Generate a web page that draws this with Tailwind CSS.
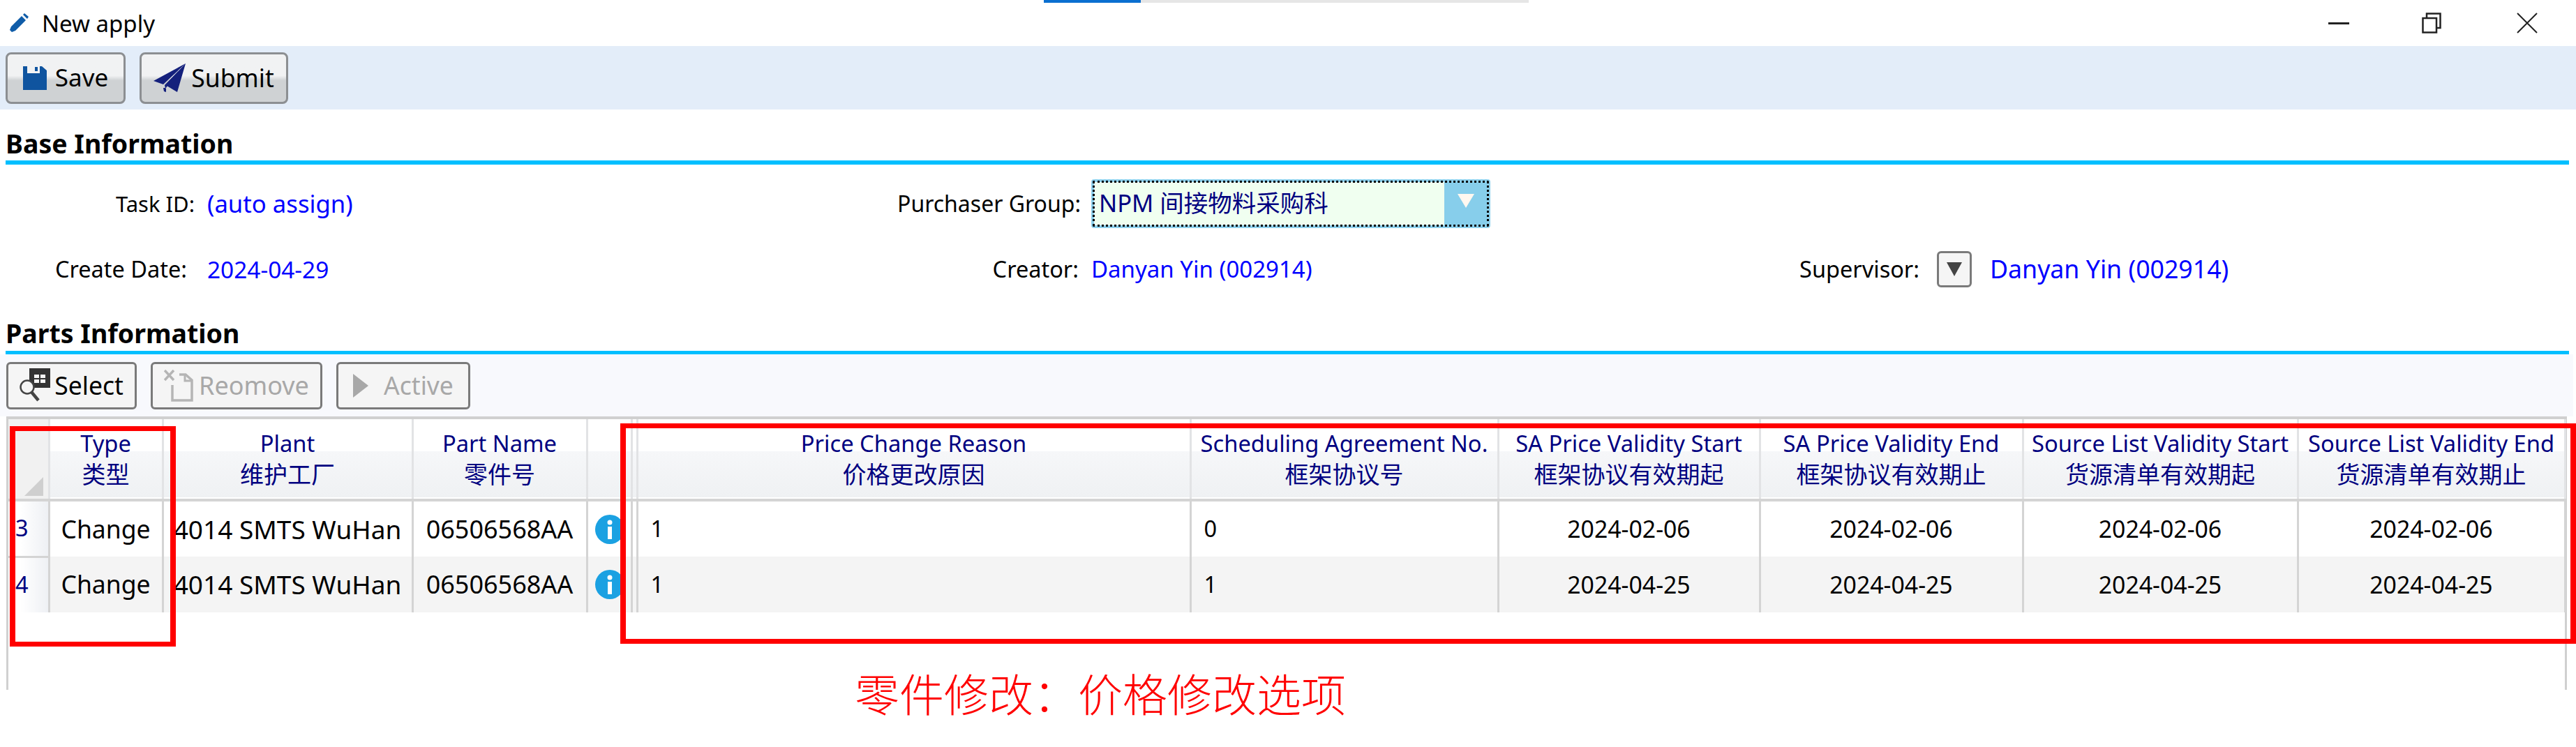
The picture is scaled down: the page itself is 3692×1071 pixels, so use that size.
<!DOCTYPE html>
<html lang="en">
<head>
    <meta charset="UTF-8">
    <title>New apply</title>
    <script src="https://cdn.jsdelivr.net/npm/@tailwindcss/browser@4"></script>
</head>
<body class="bg-white text-black overflow-hidden font-['Noto_Sans','Noto_Sans_CJK_SC',sans-serif] text-[32.5px]">
<div class="relative w-[3692px] h-[1071px]">

    <!-- title bar -->
    <div class="relative h-[66px] flex items-center pl-[13px]">
        <div class="absolute left-[1496px] top-0 w-[695px] h-1 bg-[#e6e6e6]"><div class="w-[139px] h-1 bg-[#0a6fd0]"></div></div>
        <svg class="w-[28px] h-[28px]" viewBox="0 0 28 28"><path d="M1 24 L3 19 L18 4 L24 10 L9 25 L4 27 Z M20 2 L22 0 L28 5 L26 8 Z" fill="#0f5ca8"/></svg>
        <span class="ml-[19px] text-[33px] leading-none">New apply</span>
        <div class="ml-auto flex items-center mr-[55px]">
            <svg class="w-[30px] h-[30px]" viewBox="0 0 30 30"><path d="M0 15.5 H30" stroke="#222" stroke-width="3"/></svg>
            <svg class="ml-[104px] w-[28px] h-[30px]" viewBox="0 0 28 30"><path d="M1.5 8 H21 V28.5 H1.5 Z M7 8 V1.5 H26.5 V22 H21" fill="none" stroke="#222" stroke-width="2.5"/></svg>
            <svg class="ml-[108px] w-[30px] h-[30px]" viewBox="0 0 30 30"><path d="M1 1 L29 29 M29 1 L1 29" stroke="#222" stroke-width="2"/></svg>
        </div>
    </div>

    <!-- main toolbar -->
    <div class="h-[91px] bg-[#e3edf9] flex items-center pl-2 gap-5">
        <button class="h-[74px] w-[172px] flex items-center justify-center gap-[12px] rounded-lg border-[3px] border-[#8c8f92] bg-gradient-to-b from-[#f1f2f3] from-45% to-[#cfd2d4] to-55%">
            <svg class="w-[34px] h-[34px]" viewBox="0 0 34 34"><path d="M0 0 H6 V10 H24 V0 H27 L34 6 V34 H0 Z M17 1 H21 V7 H17 Z" fill="#0f549f"/></svg>
            <span class="text-[35px]">Save</span>
        </button>
        <button class="h-[74px] w-[213px] flex items-center justify-center gap-[8px] rounded-lg border-[3px] border-[#8c8f92] bg-gradient-to-b from-[#f1f2f3] from-45% to-[#cfd2d4] to-55%">
            <svg class="w-[46px] h-[42px]" viewBox="0 0 46 42"><path d="M46 0 L0 25 L14 30 Z M46 0 L19 32 L34 41 Z M46 0 L16 31 L17 36 Z M14 35 L18 35 L18 41 L15 40 Z" fill="#14207c"/></svg>
            <span class="text-[35.5px]">Submit</span>
        </button>
    </div>

    <!-- base information -->
    <div class="mt-[26px] ml-2 mr-[10px] h-[53px] border-b-[6px] border-[#00bfff] font-bold text-[37.5px] leading-[46px]">Base Information</div>
    <div>
        <div class="flex items-center h-[94px] mt-[9px]">
            <div class="w-[279px] text-right text-[31px]">Task ID:</div>
            <div class="ml-[18px] w-[973px] text-[#0000ff] text-[34.7px]">(auto assign)</div>
            <div class="w-[279px] text-right text-[32px]">Purchaser Group:</div>
            <div class="ml-[15px] w-[572px] h-[70px] flex rounded border-[4px] border-[#8dd0ec] bg-[#f0fff0] outline-dotted outline-[3px] -outline-offset-[5px] outline-black">
                <div class="flex-1 pl-[7px] leading-[60px] text-[#000080] text-[34.5px]">NPM 间接物料采购科</div>
                <div class="w-[62px] bg-[#87ceeb] flex items-center justify-center pb-2">
                    <svg class="w-6 h-5" viewBox="0 0 24 20"><path d="M0 0 H24 L12 20 Z" fill="#fff8f0"/></svg>
                </div>
            </div>
        </div>
        <div class="flex items-center h-[94px]">
            <div class="w-[268px] text-right">Create Date:</div>
            <div class="ml-[29px] w-[1249px] text-[#0000ff] text-[33.4px]">2024-04-29</div>
            <div class="w-0 flex justify-end whitespace-nowrap">Creator:</div>
            <div class="ml-[18px] w-[1187px] text-[#0000ff] text-[33px]">Danyan Yin (002914)</div>
            <div class="w-0 flex justify-end whitespace-nowrap">Supervisor:</div>
            <button class="ml-[25px] w-[50px] h-[52px] rounded-md border-[3px] border-[#7a7a7a] bg-[#f5f5f5] flex items-center justify-center">
                <svg class="w-[22px] h-[20px]" viewBox="0 0 22 20"><path d="M0 0 H22 L11 20 Z" fill="#444"/></svg>
            </button>
            <div class="ml-[26px] text-[#0000ff] text-[35.7px]">Danyan Yin (002914)</div>
        </div>
    </div>

    <!-- parts information -->
    <div class="mt-[11px] ml-2 mr-[10px] h-[64px] pt-[11px] border-b-[5px] border-[#00bfff] font-bold text-[37.5px] leading-[46px]">Parts Information</div>
    <div class="h-[89px] mr-[4px] bg-[#f8f9fd] flex items-center pl-[9px] gap-5">
        <button class="h-[68px] w-[187px] flex items-center justify-center gap-[6px] rounded-md border-[3px] border-[#7a7a7a] bg-[#f5f5f5]">
            <svg class="w-[44px] h-[50px]" viewBox="0 0 44 50">
                <path d="M14 0 H44 V28 H14 Z" fill="#333"/><path d="M21 9 H28 V14 H21 Z M30 9 H37 V14 H30 Z M21 16 H28 V21 H21 Z M30 16 H37 V21 H30 Z" fill="#f5f5f5"/>
                <circle cx="11" cy="27" r="9.5" fill="#f5f5f5" stroke="#444" stroke-width="2.5"/><path d="M17 34 L27 46" stroke="#444" stroke-width="4.5"/>
            </svg>
            <span class="text-[35.5px]">Select</span>
        </button>
        <button class="h-[68px] w-[246px] flex items-center justify-center gap-[8px] rounded-md border-[3px] border-[#7a7a7a] bg-[#f5f5f5] text-[#a8a8a8]">
            <svg class="w-[42px] h-[46px]" viewBox="0 0 42 46">
                <path d="M1 1 L14 15 M14 1 L1 15" stroke="#b5b5b5" stroke-width="3.5"/>
                <path d="M22 7 H31 L40 15 V44 H12 V22" fill="none" stroke="#b5b5b5" stroke-width="3.5"/><path d="M30 7 V16 H40" fill="none" stroke="#b5b5b5" stroke-width="3"/>
            </svg>
            <span class="text-[36px]">Reomove</span>
        </button>
        <button class="h-[68px] w-[192px] flex items-center justify-center gap-[22px] rounded-md border-[3px] border-[#7a7a7a] bg-[#f5f5f5] text-[#a8a8a8]">
            <svg class="w-[22px] h-[34px]" viewBox="0 0 22 34"><path d="M0 0 L22 17 L0 34 Z" fill="#a8a8a8"/></svg>
            <span class="text-[35.5px]">Active</span>
        </button>
    </div>

    <!-- grid -->
    <div class="ml-[9px] w-[3670px] h-[392px] border-x-[3px] border-t-[4px] border-[#d0d0d0]">
        <table class="table-fixed w-[3664px] border-collapse">
            <colgroup>
                <col class="w-[58px]"><col class="w-[163px]"><col class="w-[358px]"><col class="w-[250px]"><col class="w-[64px]"><col class="w-[8px]"><col class="w-[793px]"><col class="w-[441px]"><col class="w-[375px]"><col class="w-[377px]"><col class="w-[394px]"><col class="w-[383px]">
            </colgroup>
            <thead>
                <tr class="h-[116px] text-[#000080] text-center text-[32.7px] leading-[45px] bg-[linear-gradient(to_bottom,#fff_41%,#f6f7f9_41%,#eff1f3_100%)] border-b-[4px] border-[#d4d4d4] [&>th]:font-normal [&>th]:border-r-[3px] [&>th]:border-[#e2e3e5] [&>th]:whitespace-nowrap [&_span]:text-[34px]">
                    <th class="relative bg-[#f1f1f1]">
                        <svg class="absolute right-[7px] bottom-[4px] w-[27px] h-[27px]" viewBox="0 0 27 27"><path d="M27 0 V27 H0 Z" fill="#cfcfcf"/></svg>
                    </th>
                    <th>Type<br><span>类型</span></th>
                    <th>Plant<br><span>维护工厂</span></th>
                    <th>Part Name<br><span>零件号</span></th>
                    <th></th>
                    <th></th>
                    <th>Price Change Reason<br><span>价格更改原因</span></th>
                    <th>Scheduling Agreement No.<br><span>框架协议号</span></th>
                    <th>SA Price Validity Start<br><span>框架协议有效期起</span></th>
                    <th>SA Price Validity End<br><span>框架协议有效期止</span></th>
                    <th>Source List Validity Start<br><span>货源清单有效期起</span></th>
                    <th>Source List Validity End<br><span>货源清单有效期止</span></th>
                </tr>
            </thead>
            <tbody class="[&_td]:border-r-[3px] [&_td]:border-[#d4d4d4] [&_td]:whitespace-nowrap">
                <tr class="h-[81px]">
                    <td class="text-[#000080] pl-[10px] bg-gradient-to-r from-white from-30% to-[#eef0f4] border-b-[3px]">3</td>
                    <td class="text-center text-[35.5px]">Change</td>
                    <td class="text-center text-[37px]">4014 SMTS WuHan</td>
                    <td class="text-center text-[36px]">06506568AA</td>
                    <td><svg class="ml-[10px] w-[42px] h-[42px]" viewBox="0 0 42 42"><circle cx="21" cy="21" r="21" fill="#1ba1e2"/><path d="M17.5 11 a3.5 3.5 0 1 1 7 0 a3.5 3.5 0 1 1 -7 0 Z M18 17 H24 V35 H18 Z" fill="#fff"/></svg></td>
                    <td></td>
                    <td class="pl-[18px]">1</td>
                    <td class="pl-[18px]">0</td>
                    <td class="text-center text-[33.8px]">2024-02-06</td>
                    <td class="text-center text-[33.8px]">2024-02-06</td>
                    <td class="text-center text-[33.8px]">2024-02-06</td>
                    <td class="text-center text-[33.8px]">2024-02-06</td>
                </tr>
                <tr class="h-[80px] bg-[#f4f4f4]">
                    <td class="text-[#000080] pl-[10px] bg-gradient-to-r from-white from-30% to-[#eef0f4]">4</td>
                    <td class="text-center text-[35.5px]">Change</td>
                    <td class="text-center text-[37px]">4014 SMTS WuHan</td>
                    <td class="text-center text-[36px]">06506568AA</td>
                    <td><svg class="ml-[10px] w-[42px] h-[42px]" viewBox="0 0 42 42"><circle cx="21" cy="21" r="21" fill="#1ba1e2"/><path d="M17.5 11 a3.5 3.5 0 1 1 7 0 a3.5 3.5 0 1 1 -7 0 Z M18 17 H24 V35 H18 Z" fill="#fff"/></svg></td>
                    <td></td>
                    <td class="pl-[18px]">1</td>
                    <td class="pl-[18px]">1</td>
                    <td class="text-center text-[33.8px]">2024-04-25</td>
                    <td class="text-center text-[33.8px]">2024-04-25</td>
                    <td class="text-center text-[33.8px]">2024-04-25</td>
                    <td class="text-center text-[33.8px]">2024-04-25</td>
                </tr>
            </tbody>
        </table>
    </div>

    <!-- red annotation overlay -->
    <div class="absolute left-[14px] top-[611px] w-[238px] h-[316px] border-x-[8px] border-y-[7px] border-[#ff0000]"></div>
    <div class="absolute left-[889px] top-[607px] w-[2803px] h-[316px] border-x-[8px] border-y-[7px] border-[#ff0000]"></div>
    <div class="absolute left-[1225px] top-[952px] text-[64px] leading-[80px] font-light text-[#ff0000] font-['Noto_Sans_CJK_SC',sans-serif]">零件修改：价格修改选项</div>
</div>
</body>
</html>
